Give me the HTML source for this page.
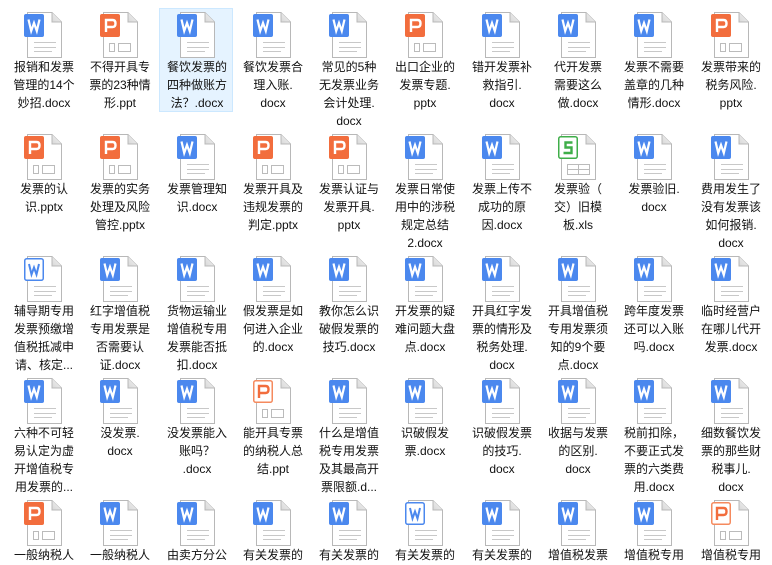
<!DOCTYPE html>
<html><head><meta charset="utf-8"><style>
html,body{margin:0;padding:0;background:#fff;width:772px;height:565px;overflow:hidden}
#w{position:relative;width:772px;height:565px;overflow:hidden}
.c{position:absolute;width:68px;height:60px}
.c svg{position:absolute;left:14px;top:0;width:40px;height:46px;overflow:visible}
.c p{position:absolute;top:46px;left:-4px;width:76px;margin:0;text-align:center;font:12px/18px "Liberation Sans","Noto Sans CJK SC",sans-serif;color:#111;white-space:nowrap}
.r5 p{height:19px;overflow:hidden}
.sel{position:absolute;left:159px;top:8px;width:72px;height:102px;background:#e5f3ff;border:1px solid #cce8ff}
</style></head><body><div id="w">
<svg width="0" height="0" style="position:absolute">
<defs>
<linearGradient id="fg" x1="0" y1="1" x2="1" y2="0"><stop offset="0" stop-color="#d8d8d8"/><stop offset="1" stop-color="#f4f4f4"/></linearGradient>
<g id="pg"><path d="M3.5 0.5H28L37.5 10V45.5H3.5Z" fill="#fff" stroke="#b8b8b8"/><path d="M28 0.5V10H37.5" fill="url(#fg)" stroke="#b8b8b8"/></g>
<g id="dl"><path d="M10 30.5H32M10 35.5H32M10 39.5H28" stroke="#c8c8c8"/></g>
<symbol id="dw" viewBox="0 0 40 46"><use href="#pg"/><use href="#dl"/><rect x="0" y="2" width="20" height="23" rx="2" fill="#4b88ee"/><path d="M4.5 7.5L7.2 19L10 11L12.8 19L15.5 7.5" stroke="#fff" stroke-width="2.2" fill="none"/></symbol>
<symbol id="do" viewBox="0 0 40 46"><use href="#pg"/><use href="#dl"/><rect x="0.75" y="2.75" width="18.5" height="21.5" rx="2" fill="#fff" stroke="#4b88ee" stroke-width="1.5"/><path d="M5 8L7.5 18.5L10 11.5L12.5 18.5L15 8" stroke="#4b88ee" stroke-width="2" fill="none"/></symbol>
<symbol id="pp" viewBox="0 0 40 46"><use href="#pg"/><path d="M9.5 31.5h5v8h-5zM18.5 31.5h12v8h-12z" fill="none" stroke="#bbb"/><rect x="0" y="2" width="20" height="23" rx="2" fill="#f26d3d"/><path d="M6 20V8H12.5Q15.5 8 15.5 11.5Q15.5 15 12.5 15H6" stroke="#fff" stroke-width="2.4" fill="none"/></symbol>
<symbol id="po" viewBox="0 0 40 46"><use href="#pg"/><path d="M9.5 31.5h5v8h-5zM18.5 31.5h12v8h-12z" fill="none" stroke="#bbb"/><rect x="0.75" y="2.75" width="18.5" height="21.5" rx="2" fill="#fff" stroke="#f58a5e" stroke-width="1.5"/><path d="M6 20V8H12.5Q15.5 8 15.5 11.5Q15.5 15 12.5 15H6" stroke="#f26d3d" stroke-width="2.4" fill="none"/></symbol>
<symbol id="xs" viewBox="0 0 40 46"><use href="#pg"/><path d="M9.5 30.5h22v10h-22zM9.5 35.5h22M20.5 30.5v10" fill="none" stroke="#bbb"/><rect x="0.75" y="2.75" width="18.5" height="21.5" rx="2" fill="#fff" stroke="#3fae49" stroke-width="1.5"/><path d="M14.5 8.5H7.5V13.5H13.5V19H5.5" stroke="#3fae49" stroke-width="2.4" fill="none"/></symbol>
</defs></svg>
<div class="sel"></div>

<div class="c" style="left:10px;top:12px"><svg><use href="#dw"/></svg><p>报销和发票<br>管理的14个<br>妙招.docx</p></div>
<div class="c" style="left:86px;top:12px"><svg><use href="#pp"/></svg><p>不得开具专<br>票的23种情<br>形.ppt</p></div>
<div class="c" style="left:163px;top:12px"><svg><use href="#dw"/></svg><p>餐饮发票的<br>四种做账方<br>法？.docx</p></div>
<div class="c" style="left:239px;top:12px"><svg><use href="#dw"/></svg><p>餐饮发票合<br>理入账.<br>docx</p></div>
<div class="c" style="left:315px;top:12px"><svg><use href="#dw"/></svg><p>常见的5种<br>无发票业务<br>会计处理.<br>docx</p></div>
<div class="c" style="left:391px;top:12px"><svg><use href="#pp"/></svg><p>出口企业的<br>发票专题.<br>pptx</p></div>
<div class="c" style="left:468px;top:12px"><svg><use href="#dw"/></svg><p>错开发票补<br>救指引.<br>docx</p></div>
<div class="c" style="left:544px;top:12px"><svg><use href="#dw"/></svg><p>代开发票<br>需要这么<br>做.docx</p></div>
<div class="c" style="left:620px;top:12px"><svg><use href="#dw"/></svg><p>发票不需要<br>盖章的几种<br>情形.docx</p></div>
<div class="c" style="left:697px;top:12px"><svg><use href="#pp"/></svg><p>发票带来的<br>税务风险.<br>pptx</p></div>

<div class="c" style="left:10px;top:134px"><svg><use href="#pp"/></svg><p>发票的认<br>识.pptx</p></div>
<div class="c" style="left:86px;top:134px"><svg><use href="#pp"/></svg><p>发票的实务<br>处理及风险<br>管控.pptx</p></div>
<div class="c" style="left:163px;top:134px"><svg><use href="#dw"/></svg><p>发票管理知<br>识.docx</p></div>
<div class="c" style="left:239px;top:134px"><svg><use href="#pp"/></svg><p>发票开具及<br>违规发票的<br>判定.pptx</p></div>
<div class="c" style="left:315px;top:134px"><svg><use href="#pp"/></svg><p>发票认证与<br>发票开具.<br>pptx</p></div>
<div class="c" style="left:391px;top:134px"><svg><use href="#dw"/></svg><p>发票日常使<br>用中的涉税<br>规定总结<br>2.docx</p></div>
<div class="c" style="left:468px;top:134px"><svg><use href="#dw"/></svg><p>发票上传不<br>成功的原<br>因.docx</p></div>
<div class="c" style="left:544px;top:134px"><svg><use href="#xs"/></svg><p>发票验（<br>交）旧模<br>板.xls</p></div>
<div class="c" style="left:620px;top:134px"><svg><use href="#dw"/></svg><p>发票验旧.<br>docx</p></div>
<div class="c" style="left:697px;top:134px"><svg><use href="#dw"/></svg><p>费用发生了<br>没有发票该<br>如何报销.<br>docx</p></div>

<div class="c" style="left:10px;top:256px"><svg><use href="#do"/></svg><p>辅导期专用<br>发票预缴增<br>值税抵减申<br>请、核定...</p></div>
<div class="c" style="left:86px;top:256px"><svg><use href="#dw"/></svg><p>红字增值税<br>专用发票是<br>否需要认<br>证.docx</p></div>
<div class="c" style="left:163px;top:256px"><svg><use href="#dw"/></svg><p>货物运输业<br>增值税专用<br>发票能否抵<br>扣.docx</p></div>
<div class="c" style="left:239px;top:256px"><svg><use href="#dw"/></svg><p>假发票是如<br>何进入企业<br>的.docx</p></div>
<div class="c" style="left:315px;top:256px"><svg><use href="#dw"/></svg><p>教你怎么识<br>破假发票的<br>技巧.docx</p></div>
<div class="c" style="left:391px;top:256px"><svg><use href="#dw"/></svg><p>开发票的疑<br>难问题大盘<br>点.docx</p></div>
<div class="c" style="left:468px;top:256px"><svg><use href="#dw"/></svg><p>开具红字发<br>票的情形及<br>税务处理.<br>docx</p></div>
<div class="c" style="left:544px;top:256px"><svg><use href="#dw"/></svg><p>开具增值税<br>专用发票须<br>知的9个要<br>点.docx</p></div>
<div class="c" style="left:620px;top:256px"><svg><use href="#dw"/></svg><p>跨年度发票<br>还可以入账<br>吗.docx</p></div>
<div class="c" style="left:697px;top:256px"><svg><use href="#dw"/></svg><p>临时经营户<br>在哪儿代开<br>发票.docx</p></div>

<div class="c" style="left:10px;top:378px"><svg><use href="#dw"/></svg><p>六种不可轻<br>易认定为虚<br>开增值税专<br>用发票的...</p></div>
<div class="c" style="left:86px;top:378px"><svg><use href="#dw"/></svg><p>没发票.<br>docx</p></div>
<div class="c" style="left:163px;top:378px"><svg><use href="#dw"/></svg><p>没发票能入<br>账吗？<br>.docx</p></div>
<div class="c" style="left:239px;top:378px"><svg><use href="#po"/></svg><p>能开具专票<br>的纳税人总<br>结.ppt</p></div>
<div class="c" style="left:315px;top:378px"><svg><use href="#dw"/></svg><p>什么是增值<br>税专用发票<br>及其最高开<br>票限额.d...</p></div>
<div class="c" style="left:391px;top:378px"><svg><use href="#dw"/></svg><p>识破假发<br>票.docx</p></div>
<div class="c" style="left:468px;top:378px"><svg><use href="#dw"/></svg><p>识破假发票<br>的技巧.<br>docx</p></div>
<div class="c" style="left:544px;top:378px"><svg><use href="#dw"/></svg><p>收据与发票<br>的区别.<br>docx</p></div>
<div class="c" style="left:620px;top:378px"><svg><use href="#dw"/></svg><p>税前扣除，<br>不要正式发<br>票的六类费<br>用.docx</p></div>
<div class="c" style="left:697px;top:378px"><svg><use href="#dw"/></svg><p>细数餐饮发<br>票的那些财<br>税事儿.<br>docx</p></div>

<div class="c r5" style="left:10px;top:500px"><svg><use href="#pp"/></svg><p>一般纳税人</p></div>
<div class="c r5" style="left:86px;top:500px"><svg><use href="#dw"/></svg><p>一般纳税人</p></div>
<div class="c r5" style="left:163px;top:500px"><svg><use href="#dw"/></svg><p>由卖方分公</p></div>
<div class="c r5" style="left:239px;top:500px"><svg><use href="#dw"/></svg><p>有关发票的</p></div>
<div class="c r5" style="left:315px;top:500px"><svg><use href="#dw"/></svg><p>有关发票的</p></div>
<div class="c r5" style="left:391px;top:500px"><svg><use href="#do"/></svg><p>有关发票的</p></div>
<div class="c r5" style="left:468px;top:500px"><svg><use href="#dw"/></svg><p>有关发票的</p></div>
<div class="c r5" style="left:544px;top:500px"><svg><use href="#dw"/></svg><p>增值税发票</p></div>
<div class="c r5" style="left:620px;top:500px"><svg><use href="#dw"/></svg><p>增值税专用</p></div>
<div class="c r5" style="left:697px;top:500px"><svg><use href="#po"/></svg><p>增值税专用</p></div>
</div></body></html>
